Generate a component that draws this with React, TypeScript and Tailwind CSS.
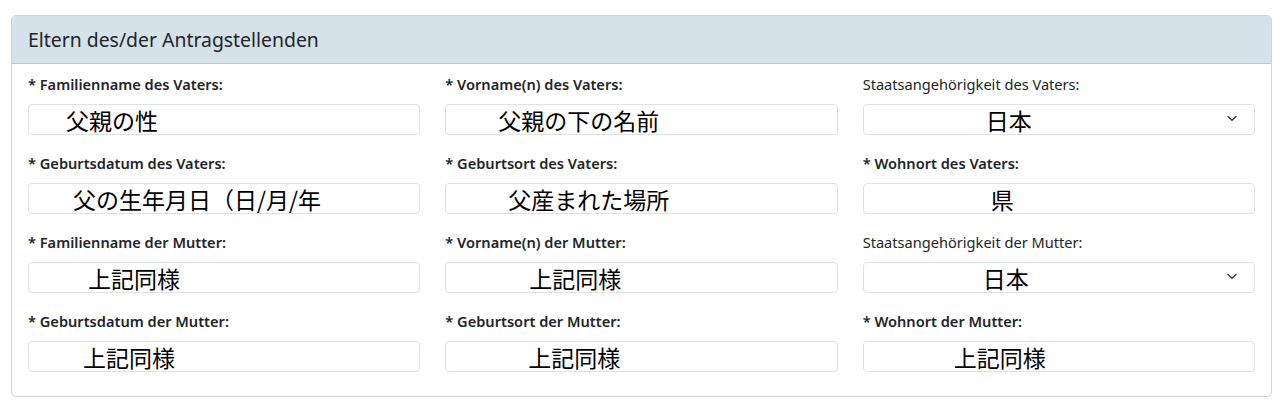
import React from "react";

type Cell = {
  label: string;
  bold: boolean;
  value: string;
  pl: string;
  select?: boolean;
};

const cells: Cell[] = [
  { label: "* Familienname des Vaters:", bold: true, value: "父親の性", pl: "pl-[37px]" },
  { label: "* Vorname(n) des Vaters:", bold: true, value: "父親の下の名前", pl: "pl-[52px]" },
  { label: "Staatsangehörigkeit des Vaters:", bold: false, value: "日本", pl: "pl-[122px]", select: true },
  { label: "* Geburtsdatum des Vaters:", bold: true, value: "父の生年月日（日/月/年", pl: "pl-[44px]" },
  { label: "* Geburtsort des Vaters:", bold: true, value: "父産まれた場所", pl: "pl-[62px]" },
  { label: "* Wohnort des Vaters:", bold: true, value: "県", pl: "pl-[127px]" },
  { label: "* Familienname der Mutter:", bold: true, value: "上記同様", pl: "pl-[59px]" },
  { label: "* Vorname(n) der Mutter:", bold: true, value: "上記同様", pl: "pl-[83px]" },
  { label: "Staatsangehörigkeit der Mutter:", bold: false, value: "日本", pl: "pl-[119px]", select: true },
  { label: "* Geburtsdatum der Mutter:", bold: true, value: "上記同様", pl: "pl-[54px]" },
  { label: "* Geburtsort der Mutter:", bold: true, value: "上記同様", pl: "pl-[82px]" },
  { label: "* Wohnort der Mutter:", bold: true, value: "上記同様", pl: "pl-[90px]" },
];

function Field({ c }: { c: Cell }) {
  return (
    <div className="flex flex-col">
      <div
        className={
          "h-[21px] leading-[21px] text-[14.6px] text-[#212529] whitespace-nowrap " +
          (c.bold ? "font-semibold" : "font-normal")
        }
        style={{ fontFamily: '"Noto Sans", "Open Sans", sans-serif' }}
      >
        {c.label}
      </div>
      <div className="mt-[9px] h-[31px] rounded-[4px] border border-[#dee2e6] bg-white flex items-center">
        <div
          className={"flex-1 text-[23px] leading-[29px] text-black whitespace-nowrap pt-[2px] " + c.pl}
          style={{ fontFamily: '"Noto Sans CJK JP", "Noto Sans CJK SC", sans-serif' }}
        >
          {c.value}
        </div>
        {c.select && (
          <svg
            className="mr-[17px] mb-[2px] shrink-0"
            width="10"
            height="7"
            viewBox="0 0 10 7"
            fill="none"
          >
            <path d="M1 1.5 L5 5.2 L9 1.5" stroke="#343a40" strokeWidth="1.4" strokeLinecap="round" strokeLinejoin="round" />
          </svg>
        )}
      </div>
    </div>
  );
}

export default function App() {
  return (
    <div className="w-[1281px] h-[414px] bg-white pt-[15px] pl-[11px]">
      <div className="w-[1261px] h-[382px] rounded-[5px] border border-[#cfd4d8] overflow-hidden bg-white">
        <div
          className="h-[48px] bg-[#d6e2ea] border-b border-[#bcc8d0] flex items-center px-[16px] text-[19.4px] text-[#212529]"
          style={{ fontFamily: '"Noto Sans", "Open Sans", sans-serif' }}
        >
          Eltern des/der Antragstellenden
        </div>
        <div className="px-[16px] pt-[10px] grid grid-cols-3 gap-x-[25px] gap-y-[18px]">
          {cells.map((c, i) => (
            <Field key={i} c={c} />
          ))}
        </div>
      </div>
    </div>
  );
}
